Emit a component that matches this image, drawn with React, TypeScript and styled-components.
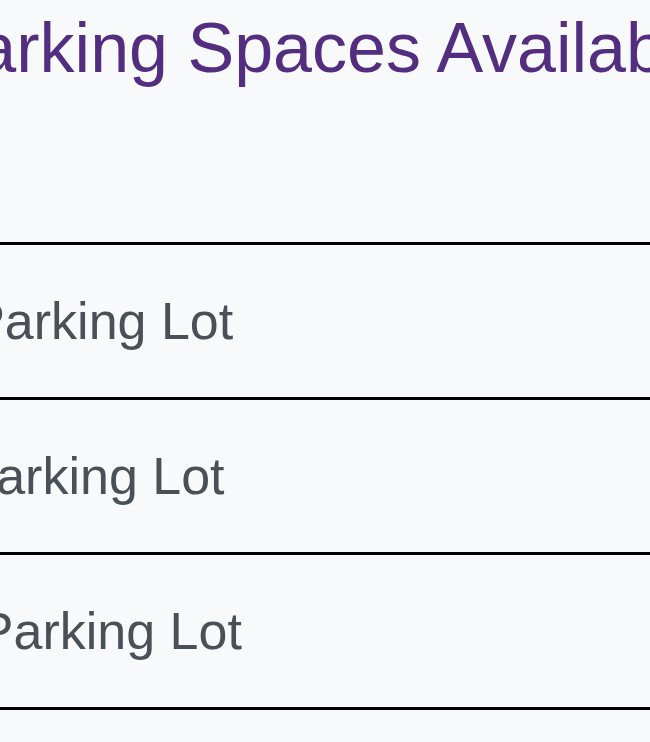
import React from 'react';
import styled, { createGlobalStyle } from 'styled-components';

const GlobalStyle = createGlobalStyle`
  html, body {
    margin: 0;
    padding: 0;
    background: #f8f9fa;
    overflow: hidden;
  }
  body {
    font-family: 'Liberation Sans', Arial, sans-serif;
  }
`;

const Page = styled.main`
  width: 650px;
  display: flex;
  flex-direction: column;
`;

// title is wider than the viewport, flex keeps it centred on both sides
const Title = styled.h1`
  display: flex;
  justify-content: center;
  white-space: nowrap;
  margin: 8px 0 154px;
  font-size: 70px;
  font-weight: 400;
  line-height: 80px;
  color: #522d80;
`;

const LotList = styled.ul`
  list-style: none;
  margin: 0 0 0 -157px;
  padding: 0;
  width: calc(100% + 157px);
`;

const LotRow = styled.li`
  display: flex;
  align-items: center;
  height: 152px;
  border-top: 3px solid #000;
  &:last-child {
    border-bottom: 3px solid #000;
  }
`;

const LotName = styled.span`
  font-size: 52px;
  line-height: normal;
  color: #495057;
  white-space: nowrap;
`;

const lots = ['Main Parking Lot', 'East Parking Lot', 'Front Parking Lot', 'West Parking Lot'];

const App: React.FC = () => (
  <>
    <GlobalStyle />
    <Page>
      <Title>Parking Spaces Available</Title>
      <LotList>
        {lots.map((name) => (
          <LotRow key={name}>
            <LotName>{name}</LotName>
          </LotRow>
        ))}
      </LotList>
    </Page>
  </>
);

export default App;
